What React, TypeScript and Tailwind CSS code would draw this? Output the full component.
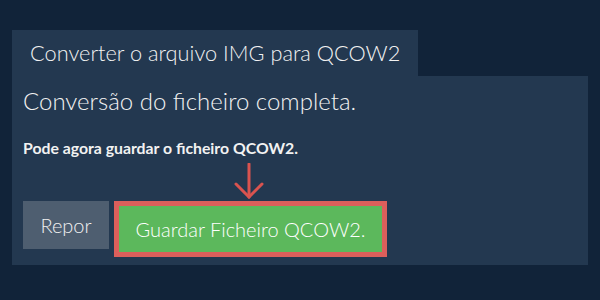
import React from 'react';

const App: React.FC = () => {
  return (
    <div
      className="min-h-[300px] w-[600px] bg-[#112339] px-[12px] pt-[30px] text-[#f2f2f2]"
      style={{ fontFamily: 'Lato, "Open Sans", sans-serif' }}
    >
      <div className="inline-block h-[46px] bg-[#233850] px-[18px] text-[21.75px] font-light leading-[46px]">
        Converter o arquivo IMG para QCOW2
      </div>
      <div className="h-[189px] bg-[#233850] px-[11px] pt-[11px]">
        <h1 className="text-[24px] font-light leading-[1.2]">Conversão do ficheiro completa.</h1>
        <p className="mt-[23px] text-[15.8px] font-bold leading-[1.2]">Pode agora guardar o ficheiro QCOW2.</p>
        <div className="flex h-[43px] items-end pl-[211px] pb-[2px]">
          <svg width="30" height="36" viewBox="0 0 30 36" fill="none" stroke="#d9534f" strokeWidth="3" strokeLinecap="round">
            <path d="M15 1 V34" />
            <path d="M2 21 L15 34 L28 21" />
          </svg>
        </div>
        <div className="flex items-start gap-[5px]">
          <button className="h-[48px] w-[86px] bg-[#4e5e70] text-[20px] font-light text-[#f2f2f2]">Repor</button>
          <button className="h-[56px] w-[273px] border-[5px] border-[#dc5f5b] bg-[#5cb85c] text-[20px] font-light text-white">
            Guardar Ficheiro QCOW2.
          </button>
        </div>
      </div>
    </div>
  );
};

export default App;
